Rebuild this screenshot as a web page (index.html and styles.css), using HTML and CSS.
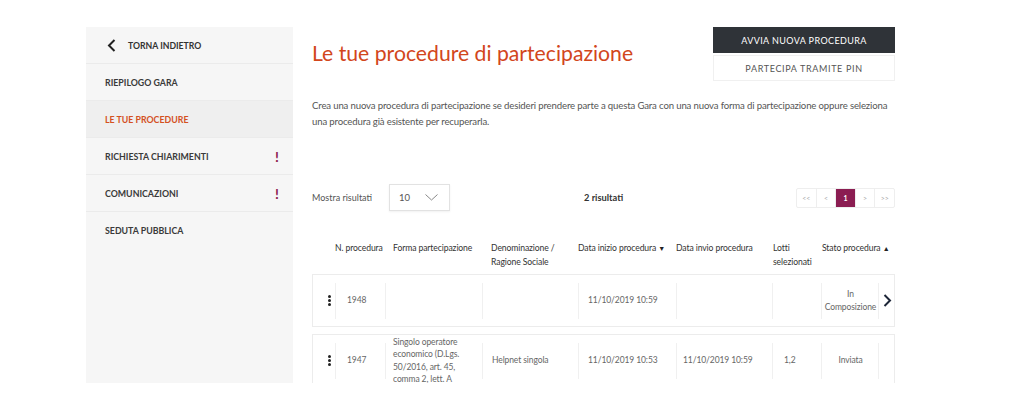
FILE: index.html
```html
<!DOCTYPE html>
<html lang="it">
<head>
  <meta charset="UTF-8">
  <meta name="viewport" content="width=device-width, initial-scale=1.0">
  <title>Le tue procedure di partecipazione</title>
  <link rel="stylesheet" href="styles.css">
</head>
<body>
  <div class="frame">
    <aside class="sidebar">
      <a class="back" href="#">
        <svg width="9" height="13" viewBox="0 0 9 13"><path d="M7.5 1 L2 6.5 L7.5 12" fill="none" stroke="#222" stroke-width="2"/></svg>
        <span>Torna indietro</span>
      </a>
      <ul class="nav">
        <li class="nav-item">Riepilogo gara</li>
        <li class="nav-item active">Le tue procedure</li>
        <li class="nav-item">Richiesta chiarimenti <span class="alert">!</span></li>
        <li class="nav-item">Comunicazioni <span class="alert">!</span></li>
        <li class="nav-item last">Seduta pubblica</li>
      </ul>
    </aside>

    <main class="content">
      <div class="top">
        <h1>Le tue procedure di partecipazione</h1>
        <div class="actions">
          <button class="btn btn-dark">Avvia nuova procedura</button>
          <button class="btn btn-light">Partecipa tramite PIN</button>
        </div>
      </div>

      <p class="intro">Crea una nuova procedura di partecipazione se desideri prendere parte a questa Gara con una nuova forma di partecipazione oppure seleziona una procedura già esistente per recuperarla.</p>

      <div class="toolbar">
        <span class="label">Mostra risultati</span>
        <div class="select">
          <span>10</span>
          <svg width="13" height="7" viewBox="0 0 13 7"><path d="M0.5 0.5 L6.5 6 L12.5 0.5" fill="none" stroke="#888" stroke-width="1"/></svg>
        </div>
        <span class="count">2 risultati</span>
        <div class="pager">
          <span class="page">&lt;&lt;</span>
          <span class="page">&lt;</span>
          <span class="page current">1</span>
          <span class="page">&gt;</span>
          <span class="page">&gt;&gt;</span>
        </div>
      </div>

      <div class="thead">
        <div class="c c-menu"></div>
        <div class="c c-num">N. procedura</div>
        <div class="c c-forma">Forma partecipazione</div>
        <div class="c c-denom">Denominazione /<br>Ragione Sociale</div>
        <div class="c c-date1">Data inizio procedura <span class="sort">▼</span></div>
        <div class="c c-date2">Data invio procedura</div>
        <div class="c c-lotti">Lotti<br>selezionati</div>
        <div class="c c-stato">Stato procedura <span class="sort">▲</span></div>
        <div class="c c-go"></div>
      </div>

      <div class="row">
        <div class="c c-menu"><span class="kebab"><i></i><i></i><i></i></span></div>
        <div class="c c-num">1948</div>
        <div class="c c-forma"></div>
        <div class="c c-denom"></div>
        <div class="c c-date1">11/10/2019 10:59</div>
        <div class="c c-date2"></div>
        <div class="c c-lotti"></div>
        <div class="c c-stato">In<br>Composizione</div>
        <div class="c c-go">
          <svg width="9" height="13" viewBox="0 0 9 13"><path d="M1.5 1 L7 6.5 L1.5 12" fill="none" stroke="#1d2638" stroke-width="2"/></svg>
        </div>
      </div>

      <div class="row">
        <div class="c c-menu"><span class="kebab"><i></i><i></i><i></i></span></div>
        <div class="c c-num">1947</div>
        <div class="c c-forma">Singolo operatore<br>economico (D.Lgs.<br>50/2016, art. 45,<br>comma 2, lett. A</div>
        <div class="c c-denom">Helpnet singola</div>
        <div class="c c-date1">11/10/2019 10:53</div>
        <div class="c c-date2">11/10/2019 10:59</div>
        <div class="c c-lotti">1,2</div>
        <div class="c c-stato">Inviata</div>
        <div class="c c-go"></div>
      </div>
    </main>
  </div>
</body>
</html>
```

FILE: styles.css
```css
body {
  margin: 0;
  background: #fff;
  font-family: Lato, "Open Sans", sans-serif;
  color: #333;
}

.frame {
  display: flex;
  width: 809px;
  height: 356px;
  margin: 27px 0 0 86px;
  overflow: hidden;
}

/* sidebar */
.sidebar {
  width: 207px;
  flex-shrink: 0;
  background: #f6f6f6;
}

.back {
  display: flex;
  align-items: center;
  gap: 12px;
  height: 36px;
  padding-left: 21px;
  border-bottom: 1px solid #ebebeb;
  font-size: 8.7px;
  font-weight: 700;
  color: #333;
  text-decoration: none;
  text-transform: uppercase;
}

.nav {
  list-style: none;
  margin: 0;
  padding: 0;
}

.nav-item {
  display: flex;
  align-items: center;
  justify-content: space-between;
  height: 36px;
  padding: 0 14px 0 19px;
  border-bottom: 1px solid #ebebeb;
  font-size: 8.8px;
  font-weight: 700;
  text-transform: uppercase;
  color: #3a3a3a;
}

.nav-item.active {
  background: #efefef;
  color: #d4511f;
}

.nav-item.last {
  border-bottom: none;
}

.alert {
  color: #8e1b50;
  font-size: 14px;
  font-weight: 700;
}

/* main */
.content {
  width: 583px;
  margin-left: 19px;
}

.top {
  display: flex;
  justify-content: space-between;
  align-items: flex-start;
}

h1 {
  margin: 11px 0 0;
  font-size: 21.2px;
  line-height: 30px;
  font-weight: 400;
  color: #d2461c;
}

.actions {
  display: flex;
  flex-direction: column;
  gap: 2px;
  width: 182px;
}

.btn {
  height: 26px;
  font-family: inherit;
  font-size: 9px;
  text-transform: uppercase;
  border: none;
  cursor: pointer;
}

.btn-dark {
  background: #2f3338;
  color: #fff;
  letter-spacing: 0.4px;
}

.btn-light {
  background: #fff;
  color: #555;
  letter-spacing: 0.65px;
  border: 1px solid #f0f0f0;
}

.intro {
  margin: 17px 0 0;
  font-size: 9.6px;
  letter-spacing: -0.15px;
  line-height: 16px;
  color: #555;
}

.toolbar {
  display: flex;
  align-items: center;
  height: 27px;
  margin-top: 54px;
  font-size: 9px;
}

.label {
  width: 77px;
  color: #555;
}

.select {
  display: flex;
  align-items: center;
  justify-content: space-between;
  box-sizing: border-box;
  width: 61px;
  height: 27px;
  padding: 0 11px 0 9px;
  border: 1px solid #e2e2e2;
  box-shadow: 0 1px 2px rgba(0, 0, 0, 0.06);
  font-size: 9.5px;
  color: #555;
}

.count {
  margin-left: 134px;
  font-size: 9.3px;
  font-weight: 700;
}

.pager {
  display: flex;
  margin-left: auto;
  border: 1px solid #eee;
  border-radius: 2px;
}

.page {
  width: 18.6px;
  height: 18px;
  line-height: 18px;
  text-align: center;
  font-size: 7px;
  color: #aaa;
  border-left: 1px solid #eee;
}

.page:first-child {
  border-left: none;
}

.page.current {
  background: #8b1d52;
  color: #fff;
  font-weight: 700;
}

/* table */
.thead,
.row {
  display: flex;
}

.thead {
  margin-top: 30px;
  font-size: 8.6px;
  letter-spacing: -0.1px;
  line-height: 14px;
  color: #333;
}

.c {
  position: relative;
  flex-shrink: 0;
  box-sizing: border-box;
}

.c-menu { width: 23px; }
.c-num { width: 50px; }
.c-forma { width: 97px; }
.c-denom { width: 96px; }
.c-date1 { width: 98px; }
.c-date2 { width: 96px; }
.c-lotti { width: 49px; }
.c-stato { width: 57px; }
.c-go { width: 17px; }

.thead .c-forma { padding-left: 8px; }
.thead .c-denom { padding-left: 9px; }
.thead .c-lotti,
.thead .c-stato { padding-left: 1px; }
.thead .c-stato { width: 74px; white-space: nowrap; }

.sort {
  font-size: 7px;
  color: #222;
}

.row {
  align-items: center;
  box-sizing: border-box;
  min-height: 53px;
  margin-top: 5px;
  border: 1px solid #ececec;
  font-size: 8.5px;
  letter-spacing: -0.1px;
  line-height: 12.5px;
  color: #666;
}

.row + .row {
  margin-top: 7px;
}

.row .c {
  padding-left: 9px;
}

.row .c::before {
  content: "";
  position: absolute;
  left: -1px;
  top: 50%;
  height: 36px;
  margin-top: -18px;
  border-left: 1px solid #f0f0f0;
}

.row .c-menu {
  padding-left: 0;
  display: flex;
  justify-content: center;
}

.row .c-menu::before {
  display: none;
}

.row .c-num { padding-left: 11px; }
.row .c-forma { padding-left: 7px; }
.row .c-date2 { padding-left: 6px; }
.row .c-lotti { padding-left: 11px; }

.row .c-stato {
  padding-left: 0;
  text-align: center;
}

.row .c-go {
  padding-left: 4px;
  display: flex;
  align-items: center;
}

.kebab {
  display: flex;
  flex-direction: column;
  gap: 1px;
  margin-left: 10px;
}

.kebab i {
  width: 3px;
  height: 3px;
  border-radius: 50%;
  background: #222;
}
```
